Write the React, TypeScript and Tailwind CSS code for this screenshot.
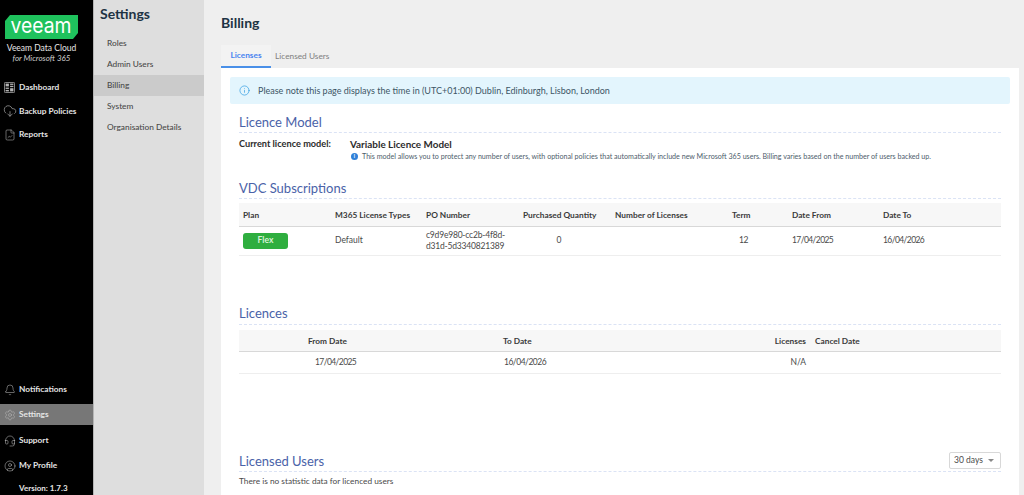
import type { ReactNode } from 'react';
import { Bell, CloudDownload, FileChartLine, Headset, Info, Settings, CircleUser } from 'lucide-react';

const FONT = "font-['Lato','Liberation_Sans',sans-serif]";

function DashboardIcon() {
  return (
    <svg width="11" height="11" viewBox="0 0 11 11" className="text-[#b4b4b4]">
      <rect x="0.4" y="0.4" width="10.2" height="10.2" rx="1" fill="none" stroke="currentColor" strokeWidth="0.8" />
      <rect x="1.6" y="1.6" width="3.3" height="2.8" fill="currentColor" />
      <rect x="6.1" y="1.6" width="3.3" height="1.3" fill="currentColor" />
      <rect x="6.1" y="3.8" width="3.3" height="1.3" fill="currentColor" />
      <rect x="1.6" y="5.6" width="3.3" height="1.3" fill="currentColor" />
      <rect x="1.6" y="7.9" width="3.3" height="1.5" fill="currentColor" />
      <rect x="6.1" y="6.2" width="3.3" height="3.2" fill="currentColor" />
    </svg>
  );
}

function VeeamLogo() {
  return (
    <svg width="73" height="24" viewBox="0 0 73 24" className="ml-[5px] block overflow-visible">
      <polygon points="5,0 73,0 73,18 68,24 0,24 0,6" fill="#1fc25d" />
      <text
        x="36"
        y="17.5"
        textAnchor="middle"
        fill="#fff"
        fontSize="21"
        fontFamily="Inter, sans-serif"
        textLength="61"
        lengthAdjust="spacingAndGlyphs"
      >
        veeam
      </text>
    </svg>
  );
}

function NavItem({ icon, label, active }: { icon: ReactNode; label: string; active?: boolean }) {
  return (
    <div className={`flex h-[21px] items-center ${active ? 'bg-[#777777]' : ''}`}>
      <span className="flex w-[19px] justify-center text-[#b8b8b8]">{icon}</span>
      <span className="text-[8.3px] font-bold text-[#e4e4e4]">{label}</span>
    </div>
  );
}

function SubLink({ label, active }: { label: string; active?: boolean }) {
  return (
    <div className={`flex h-[21px] items-center pl-[13px] text-[8.3px] font-medium text-[#4a4a4a] ${active ? 'bg-[#cbcbcb]' : ''}`}>
      {label}
    </div>
  );
}

function SectionTitle({ children, right }: { children: ReactNode; right?: ReactNode }) {
  return (
    <div className="flex h-[20px] items-center justify-between border-b border-dashed border-[#dbe3f5] text-[13px] text-[#4a62a8]">
      <span>{children}</span>
      {right}
    </div>
  );
}

function Th({ children, className = '' }: { children?: ReactNode; className?: string }) {
  return <th className={`px-1 pt-[1px] text-left text-[8.3px] font-bold text-[#3a3a3a] ${className}`}>{children}</th>;
}

function Td({ children, className = '' }: { children?: ReactNode; className?: string }) {
  return <td className={`px-1 text-[8.5px] text-[#4a4a4a] ${className}`}>{children}</td>;
}

export default function App() {
  return (
    <div className={`flex h-[495px] w-[1024px] overflow-hidden bg-[#efefef] ${FONT}`}>
      <aside className="flex w-[93px] shrink-0 flex-col justify-between bg-black">
        <div className="pt-[15px]">
          <VeeamLogo />
          <div className="mt-[4px] w-[83px] text-center text-[8.5px] leading-[10px] text-[#e8e8e8]">Veeam Data Cloud</div>
          <div className="w-[83px] text-center text-[8px] italic leading-[10px] text-[#d0d0d0]">for Microsoft 365</div>
          <div className="mt-[14px] flex flex-col gap-[2.5px]">
            <NavItem icon={<DashboardIcon />} label="Dashboard" />
            <NavItem icon={<CloudDownload size={14} strokeWidth={1.1} />} label="Backup Policies" />
            <NavItem icon={<FileChartLine size={12} strokeWidth={1.1} />} label="Reports" />
          </div>
        </div>
        <div className="flex flex-col">
          <NavItem icon={<Bell size={12} strokeWidth={1.1} />} label="Notifications" />
          <div className="mt-[4px]">
            <NavItem icon={<Settings size={12} strokeWidth={1.1} />} label="Settings" active />
          </div>
          <div className="mt-[5px]">
            <NavItem icon={<Headset size={12} strokeWidth={1.1} />} label="Support" />
          </div>
          <div className="mt-[4px]">
            <NavItem icon={<CircleUser size={12} strokeWidth={1.1} />} label="My Profile" />
          </div>
          <div className="mt-[5px] flex h-[14px] items-center pl-[19px] text-[8px] font-bold text-[#e4e4e4]">Version: 1.7.3</div>
        </div>
      </aside>

      <nav className="w-[111px] shrink-0 border-l border-[#b5b5b5] bg-[#dedede]">
        <h2 className="pl-[6px] pt-[5px] text-[14px] font-bold leading-[18px] text-[#1d3344]">Settings</h2>
        <div className="mt-[10px]">
          <SubLink label="Roles" />
          <SubLink label="Admin Users" />
          <SubLink label="Billing" active />
          <SubLink label="System" />
          <SubLink label="Organisation Details" />
        </div>
      </nav>

      <main className="ml-[17px] flex min-w-0 flex-1 flex-col pr-[5px]">
        <h1 className="pt-[14px] text-[14px] font-bold leading-[18px] text-[#1d3344]">Billing</h1>
        <div className="mt-[13px] flex h-[23px]">
          <div className="flex w-[50px] items-center justify-center border-b-2 border-[#4a90e8] bg-[#f3f3f3] text-[8.3px] font-bold text-[#4a84f0]">
            Licenses
          </div>
          <div className="flex items-center pl-[4px] text-[8.3px] text-[#808080]">Licensed Users</div>
        </div>

        <div className="flex-1 bg-white pl-[9px] pr-[9px] pt-[9px]">
          <div className="flex h-[27px] items-center rounded-[2px] bg-[#e3f5fd] pl-[9px] text-[9px] text-[#3d5566]">
            <Info size={11} strokeWidth={1.5} className="mr-[8px] text-[#2f9be0]" />
            Please note this page displays the time in (UTC+01:00) Dublin, Edinburgh, Lisbon, London
          </div>

          <div className="px-[9px]">
            <div className="mt-[9px]">
              <SectionTitle>Licence Model</SectionTitle>
            </div>
            <div className="mt-[4px] flex">
              <div className="w-[111px] text-[9.2px] font-bold leading-[14px] text-[#2c2c2c]">Current licence model:</div>
              <div>
                <div className="text-[9.9px] font-bold leading-[14px] text-[#2c2c2c]">Variable Licence Model</div>
                <div className="flex items-center text-[7.12px] leading-[11px] text-[#4d5d6b]">
                  <span className="mr-[4px] ml-[1px] flex h-[7px] w-[7px] items-center justify-center rounded-full bg-[#2f80d8] text-[5px] font-bold text-white">i</span>
                  This model allows you to protect any number of users, with optional policies that automatically include new Microsoft 365 users. Billing varies based on the number of users backed up.
                </div>
              </div>
            </div>

            <div className="mt-[17px]">
              <SectionTitle>VDC Subscriptions</SectionTitle>
            </div>
            <table className="mt-[4px] w-full table-fixed border-collapse">
              <colgroup>
                <col className="w-[92px]" />
                <col className="w-[91px]" />
                <col className="w-[97px]" />
                <col className="w-[92px]" />
                <col className="w-[117px]" />
                <col className="w-[60px]" />
                <col className="w-[91px]" />
                <col />
              </colgroup>
              <thead>
                <tr className="h-[23px] border-b-[1.5px] border-[#d8d8d8] bg-[#f7f7f7]">
                  <Th>Plan</Th>
                  <Th>M365 License Types</Th>
                  <Th>PO Number</Th>
                  <Th>Purchased Quantity</Th>
                  <Th>Number of Licenses</Th>
                  <Th>Term</Th>
                  <Th>Date From</Th>
                  <Th>Date To</Th>
                </tr>
              </thead>
              <tbody>
                <tr className="h-[29px] border-b border-[#eeeeee]">
                  <Td>
                    <div className="flex h-[16px] w-[45px] items-center justify-center rounded-[3px] bg-[#2fae3f] text-[8.5px] font-bold text-[#d8f3d8]">Flex</div>
                  </Td>
                  <Td>Default</Td>
                  <Td className="leading-[11px] tracking-[-0.2px]">c9d9e980-cc2b-4f8d-d31d-5d3340821389</Td>
                  <Td className="pr-[16px] text-center">0</Td>
                  <Td />
                  <Td className="pr-[33px] text-center tracking-[-0.5px]">12</Td>
                  <Td className="tracking-[-0.6px]">17/04/2025</Td>
                  <Td className="tracking-[-0.6px]">16/04/2026</Td>
                </tr>
              </tbody>
            </table>

            <div className="mt-[49px]">
              <SectionTitle>Licences</SectionTitle>
            </div>
            <table className="mt-[5px] w-full table-fixed border-collapse">
              <colgroup>
                <col className="w-[195px]" />
                <col className="w-[273px]" />
                <col className="w-[103px]" />
                <col />
              </colgroup>
              <thead>
                <tr className="h-[22px] border-b-[1.5px] border-[#d8d8d8] bg-[#f7f7f7]">
                  <Th className="pl-[69px]">From Date</Th>
                  <Th className="pl-[69px]">To Date</Th>
                  <Th className="text-right">Licenses</Th>
                  <Th className="pl-[5px]">Cancel Date</Th>
                </tr>
              </thead>
              <tbody>
                <tr className="h-[22px] border-b border-[#eeeeee]">
                  <Td className="pl-[76px] tracking-[-0.6px]">17/04/2025</Td>
                  <Td className="pl-[70px] tracking-[-0.5px]">16/04/2026</Td>
                  <Td className="text-right">N/A</Td>
                  <Td />
                </tr>
              </tbody>
            </table>

            <div className="mt-[78px]">
              <SectionTitle
                right={
                  <span className="mb-[3px] flex h-[17px] w-[52px] items-center gap-[5px] rounded-[2px] border border-[#d8d8d8] pl-[4px] text-[8.5px] text-[#4a4a4a]">
                    30 days
                    <span className="h-0 w-0 border-x-[3px] border-t-[3px] border-x-transparent border-t-[#888888]" />
                  </span>
                }
              >
                Licensed Users
              </SectionTitle>
            </div>
            <div className="mt-[3px] text-[8.3px] leading-[12px] text-[#4a4a4a]">There is no statistic data for licenced users</div>
          </div>
        </div>
      </main>
    </div>
  );
}
